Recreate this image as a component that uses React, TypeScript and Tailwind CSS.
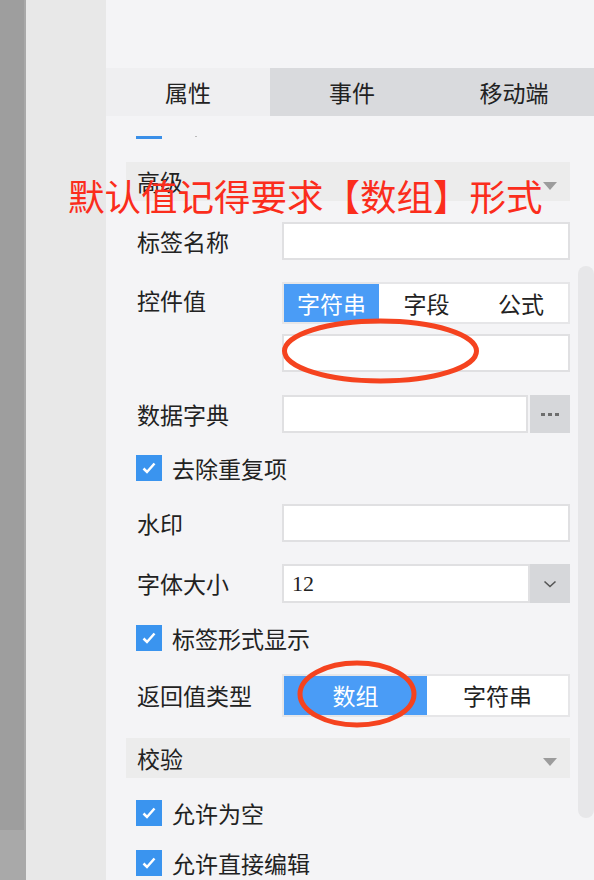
import React from "react";

const Triangle = () => (
    <svg width="14" height="8" viewBox="0 0 14 8" className="mt-[8px]">
        <path d="M0 0 L14 0 L7 8 Z" fill="#9c9c9c" />
    </svg>
);

const SectionHeader = ({ title, h }: { title: string; h: string }) => (
    <div className={`flex items-center justify-between bg-[#ececec] pl-[11px] pr-[13px] ${h}`}>
        <span className="text-[23px] text-[#222]">{title}</span>
        <Triangle />
    </div>
);

const Check = ({ label, mt }: { label: string; mt: string }) => (
    <div className={`flex items-center gap-[10px] pl-[10px] h-[26px] ${mt}`}>
        <span className="flex items-center justify-center w-[26px] h-[26px] bg-[#3a94ef]">
            <svg width="14" height="12" viewBox="0 0 14 12">
                <path d="M1.5 6.5 L5 10 L12.5 1.5" stroke="#fff" strokeWidth="2.5" fill="none" />
            </svg>
        </span>
        <span className="text-[23px] leading-none text-[#222]">{label}</span>
    </div>
);

const Field = ({ label, mt, children }: { label: string; mt: string; children?: React.ReactNode }) => (
    <div className={`flex items-center ${mt}`}>
        <span className="w-[156px] pl-[11px] text-[23px] text-[#222] shrink-0">{label}</span>
        <div className="flex-1">{children ?? <div className="h-[38px] bg-white border-2 border-[#e0e0e2]" />}</div>
    </div>
);

export default function App() {
    return (
        <div className="relative flex w-[594px] h-[880px] overflow-hidden font-['Noto_Sans_CJK_SC',sans-serif]">
            {/* left rails */}
            <div className="flex flex-col w-[26px]">
                <div className="flex flex-1">
                    <div className="w-[24px] bg-[#9e9e9e]" />
                    <div className="w-[2px] bg-[#a9a9a9]" />
                </div>
                <div className="h-[50px] bg-[#a9a9a9]" />
            </div>
            <div className="w-[80px] bg-[#e8e8e8]" />

            {/* panel */}
            <div className="flex flex-col flex-1 bg-[#f4f4f6]">
                <div className="h-[68px]" />
                <div className="flex h-[48px] text-[23px] text-[#222]">
                    <div className="w-[164px] flex items-center justify-center bg-[#efeff1]">属性</div>
                    <div className="w-[164px] flex items-center justify-center bg-[#d9dadd]">事件</div>
                    <div className="flex-1 flex items-center justify-center bg-[#d9dadd]">移动端</div>
                </div>

                <div className="flex flex-1">
                    <div className="flex flex-col w-[444px] ml-[20px]">
                        <div className="flex items-start mt-[20px] h-[3px]">
                            <span className="ml-[10px] w-[26px] h-[3px] bg-[#3a8fe8]" />
                            <span className="ml-[33px] w-[2px] h-[1px] bg-[#bbbbbb]" />
                        </div>
                        <div className="mt-[23px]">
                            <SectionHeader title="高级" h="h-[39px]" />
                        </div>

                        <Field label="标签名称" mt="mt-[21px]" />

                        <div className="flex items-start mt-[22px]">
                            <span className="w-[156px] pl-[11px] pt-[1px] text-[23px] text-[#222] shrink-0">控件值</span>
                            <div className="flex-1 flex flex-col">
                                <div className="flex h-[42px] bg-white border-2 border-[#e6e6e8] text-[23px]">
                                    <div className="w-[95px] flex items-center justify-center bg-[#4a9cf6] text-white">字符串</div>
                                    <div className="w-[95px] flex items-center justify-center text-[#222]">字段</div>
                                    <div className="flex-1 flex items-center justify-center text-[#222]">公式</div>
                                </div>
                                <div className="mt-[10px] h-[38px] bg-white border-2 border-[#e0e0e2]" />
                            </div>
                        </div>

                        <Field label="数据字典" mt="mt-[23px]">
                            <div className="flex h-[38px]">
                                <div className="flex-1 bg-white border-2 border-[#e0e0e2]" />
                                <div className="w-[40px] ml-[2px] flex items-center justify-center gap-[3px] bg-[#d6d7da]">
                                    <span className="w-[4px] h-[3px] bg-[#6e6e6e]" />
                                    <span className="w-[4px] h-[3px] bg-[#6e6e6e]" />
                                    <span className="w-[4px] h-[3px] bg-[#6e6e6e]" />
                                </div>
                            </div>
                        </Field>

                        <Check label="去除重复项" mt="mt-[22px]" />

                        <Field label="水印" mt="mt-[23px]" />

                        <Field label="字体大小" mt="mt-[22px]">
                            <div className="flex h-[39px]">
                                <div className="flex-1 flex items-center pl-[8px] bg-white border-2 border-[#e0e0e2] text-[22px] text-[#222] font-['Liberation_Serif',serif]">12</div>
                                <div className="w-[40px] flex items-center justify-center bg-[#d6d7da]">
                                    <svg width="14" height="8" viewBox="0 0 14 8">
                                        <path d="M1.5 1.5 L7 6.5 L12.5 1.5" stroke="#555" strokeWidth="1.6" fill="none" />
                                    </svg>
                                </div>
                            </div>
                        </Field>

                        <Check label="标签形式显示" mt="mt-[22px]" />

                        <Field label="返回值类型" mt="mt-[23px]">
                            <div className="flex h-[43px] bg-white border-2 border-[#e6e6e8] text-[23px]">
                                <div className="w-[143px] flex items-center justify-center bg-[#4a9cf6] text-white">数组</div>
                                <div className="flex-1 flex items-center justify-center text-[#222]">字符串</div>
                            </div>
                        </Field>

                        <div className="mt-[21px]">
                            <SectionHeader title="校验" h="h-[40px]" />
                        </div>

                        <Check label="允许为空" mt="mt-[22px]" />
                        <Check label="允许直接编辑" mt="mt-[24px]" />
                    </div>

                    <div className="ml-[8px] w-[16px] pt-[150px]">
                        <div className="h-[552px] rounded-[8px] bg-[#e7e7e9]" />
                    </div>
                </div>
            </div>

            {/* annotations */}
            <div className="absolute left-[68px] top-[174px] text-[36.5px] leading-[44px] text-[#fb2d1c] whitespace-nowrap">
                默认值记得要求【数组】形式
            </div>
            <svg className="absolute left-0 top-0 pointer-events-none" width="594" height="880">
                <ellipse cx="380.5" cy="351" rx="96" ry="30" stroke="#f5431f" strokeWidth="5" fill="none" />
                <ellipse cx="357" cy="694" rx="57" ry="31" stroke="#f5431f" strokeWidth="5" fill="none" />
            </svg>
        </div>
    );
}
